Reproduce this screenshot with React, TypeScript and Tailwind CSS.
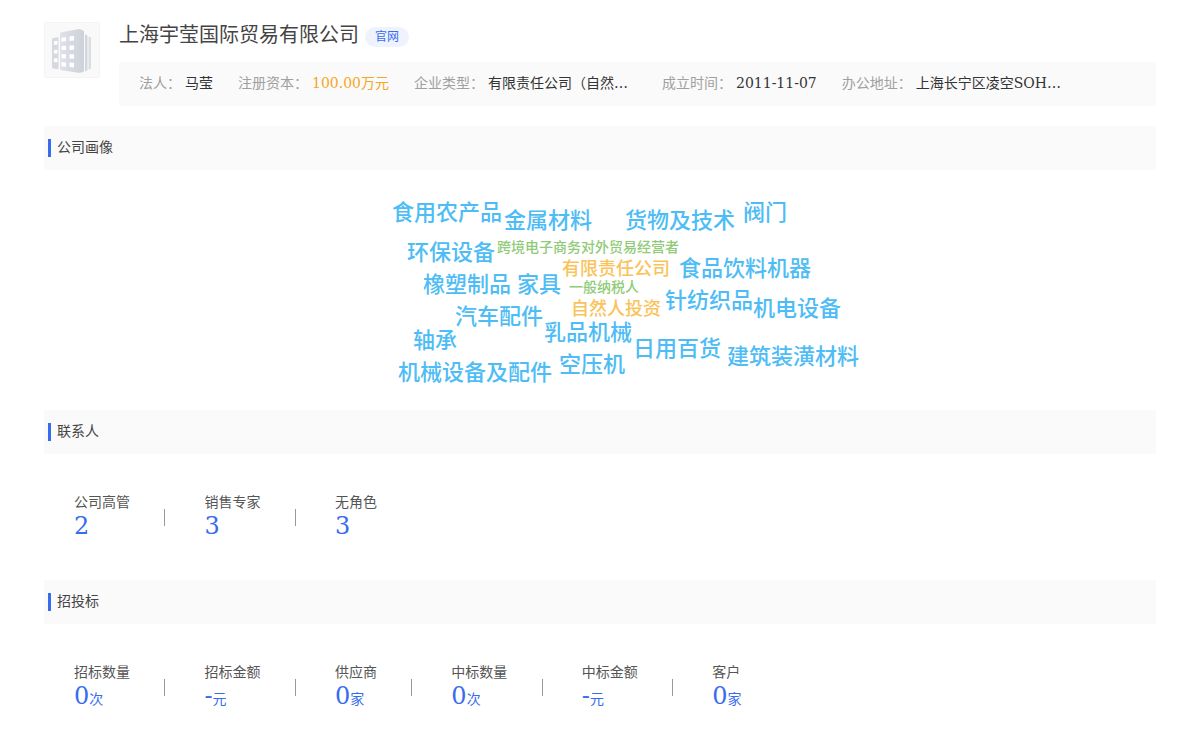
import React from 'react';

interface InfoItem {
    label: string;
    value: string;
    className?: string;
}

interface Stat {
    label: string;
    value: string;
    unit?: string;
}

interface CloudWord {
    text: string;
    className: string;
}

const companyInfo: InfoItem[] = [
    { label: '法人', value: '马莹' },
    { label: '注册资本', value: '100.00万元', className: 'text-[#f5a623]' },
    { label: '企业类型', value: '有限责任公司（自然…', className: 'w-[149px]' },
    { label: '成立时间', value: '2011-11-07' },
    { label: '办公地址', value: '上海长宁区凌空SOH…', className: 'w-[149px]' },
];

const contactStats: Stat[] = [
    { label: '公司高管', value: '2' },
    { label: '销售专家', value: '3' },
    { label: '无角色', value: '3' },
];

const bidStats: Stat[] = [
    { label: '招标数量', value: '0', unit: '次' },
    { label: '招标金额', value: '-', unit: '元' },
    { label: '供应商', value: '0', unit: '家' },
    { label: '中标数量', value: '0', unit: '次' },
    { label: '中标金额', value: '-', unit: '元' },
    { label: '客户', value: '0', unit: '家' },
];

// Positions are relative to the 480x240 cloud canvas
const cloudWords: CloudWord[] = [
    { text: '食用农产品', className: 'left-[32px] top-[31px] text-[22px] text-[#4ebcf5]' },
    { text: '金属材料', className: 'left-[144px] top-[39px] text-[22px] text-[#4ebcf5]' },
    { text: '货物及技术', className: 'left-[265px] top-[39px] text-[22px] text-[#4ebcf5]' },
    { text: '阀门', className: 'left-[383px] top-[31px] text-[22px] text-[#4ebcf5]' },
    { text: '环保设备', className: 'left-[47px] top-[71px] text-[22px] text-[#4ebcf5]' },
    { text: '跨境电子商务对外贸易经营者', className: 'left-[137px] top-[65px] text-[14px] text-[#8fcb78]' },
    { text: '有限责任公司', className: 'left-[202px] top-[87px] text-[18px] text-[#fac35a]' },
    { text: '食品饮料机器', className: 'left-[319px] top-[87px] text-[22px] text-[#4ebcf5]' },
    { text: '橡塑制品', className: 'left-[63px] top-[103px] text-[22px] text-[#4ebcf5]' },
    { text: '家具', className: 'left-[157px] top-[103px] text-[22px] text-[#4ebcf5]' },
    { text: '一般纳税人', className: 'left-[209px] top-[105px] text-[14px] text-[#8fcb78]' },
    { text: '针纺织品', className: 'left-[305px] top-[119px] text-[22px] text-[#4ebcf5]' },
    { text: '机电设备', className: 'left-[393px] top-[127px] text-[22px] text-[#4ebcf5]' },
    { text: '自然人投资', className: 'left-[211px] top-[127px] text-[18px] text-[#fac35a]' },
    { text: '汽车配件', className: 'left-[95px] top-[135px] text-[22px] text-[#4ebcf5]' },
    { text: '乳品机械', className: 'left-[184px] top-[151px] text-[22px] text-[#4ebcf5]' },
    { text: '轴承', className: 'left-[53px] top-[159px] text-[22px] text-[#4ebcf5]' },
    { text: '日用百货', className: 'left-[273px] top-[167px] text-[22px] text-[#4ebcf5]' },
    { text: '建筑装潢材料', className: 'left-[367px] top-[175px] text-[22px] text-[#4ebcf5]' },
    { text: '空压机', className: 'left-[199px] top-[183px] text-[22px] text-[#4ebcf5]' },
    { text: '机械设备及配件', className: 'left-[38px] top-[191px] text-[22px] text-[#4ebcf5]' },
];

const CompanyLogo: React.FC = () => (
    <svg viewBox="0 0 56 56" className="h-14 w-14 shrink-0" aria-hidden="true">
        <defs>
            <linearGradient id="tower" x1="0" y1="0" x2="1" y2="0">
                <stop offset="0" stopColor="#dfe2e7" />
                <stop offset="1" stopColor="#cdd1d9" />
            </linearGradient>
        </defs>
        <rect x="0.5" y="0.5" width="55" height="55" rx="1" fill="#f9f9f9" stroke="#f4f4f4" />
        <path d="M8 17.500Q8 16.200 9.300 16L14.500 15.200V47.300L9.300 46.600Q8 46.400 8 45.200Z" fill="#d6d9df" />
        <path d="M16 12Q16 10.600 17.400 10.200L34 7.200Q35 7 36 7.300L38.800 8.300Q40 8.800 40 10V48.500Q40 49.700 38.800 50L36 50.700Q35 50.900 34 50.700L17.400 48.200Q16 48 16 46.700Z" fill="url(#tower)" />
        <path d="M41 12.200L43.500 13.500V48.200L41 49.300Z" fill="#d3d7dd" />
        <path d="M44.500 14.200L47 15.500V46.800L44.500 47.800Z" fill="#dadde2" />
        <g fill="#fff">
            <path d="M10 19.200L13.500 18.700V22.500L10 22.800ZM10 28L13.500 27.800V31.600L10 31.500ZM10 36.300L13.500 36.500V40.200L10 39.900Z" />
            <path d="M17.500 15.700L22 15V19.300L17.500 19.700ZM17.500 24.100L22 23.800V28L17.500 28.100ZM17.500 32.200H22V36.500L17.500 36.300ZM17.500 40.200L22 40.500V44.700L17.500 44.200Z" />
            <path d="M25.500 14.500L30 13.700V18.500L25.500 19ZM25.500 23.500L30 23.200V27.800L25.500 28ZM25.500 32.200H30V36.800L25.500 36.600ZM25.500 40.500L30 40.900V45.600L25.500 45Z" />
        </g>
    </svg>
);

const SectionTitle: React.FC<{ title: string }> = ({ title }) => (
    <div className="flex h-11 items-center bg-[#fafafa] pl-1">
        <span className="h-[18px] w-[3px] bg-[#386cee]" />
        <h2 className="ml-1.5 pb-0.5 text-sm text-[#444]">{title}</h2>
    </div>
);

const StatList: React.FC<{ stats: Stat[] }> = ({ stats }) => (
    <div className="h-[126px] pl-[30px] pt-[38px] text-sm">
        {stats.map((stat, index) => (
            <React.Fragment key={stat.label}>
                {index > 0 && (
                    <>
                        {' '}
                        <span className="ml-[30px] mr-[39px] mt-0.5 inline-block h-[17px] w-px bg-[#999] align-middle" />
                    </>
                )}
                <div className="inline-block align-middle">
                    <p className="leading-5 text-[#555]">{stat.label}</p>
                    <p className="text-2xl leading-7 text-[#386cee]">
                        {stat.value}
                        {stat.unit && <span className="text-sm leading-none">{stat.unit}</span>}
                    </p>
                </div>
            </React.Fragment>
        ))}
    </div>
);

const App: React.FC = () => {
    return (
        <div className="bg-white px-11 pt-[22px] font-['DejaVu_Serif','Noto_Sans_CJK_SC',serif] text-[#333]">
            <header className="flex">
                <CompanyLogo />
                <div className="ml-[19px] min-w-0 flex-1">
                    <div className="flex h-10 items-start">
                        <h1 className="text-xl leading-[26px] text-[#444]">上海宇莹国际贸易有限公司</h1>
                        <a href="#" className="ml-1.5 mt-[5px] rounded-full bg-[#eff3fe] px-2.5 text-xs leading-5 text-[#386cee]">
                            官网
                        </a>
                    </div>
                    <dl className="flex h-11 items-center gap-[25px] bg-[#fafafa] pb-0.5 pl-5 text-sm">
                        {companyInfo.map(item => (
                            <div key={item.label} className="flex gap-1 whitespace-nowrap">
                                <dt className="text-[#a0a0a0]">{item.label}：</dt>
                                <dd className={item.className}>{item.value}</dd>
                            </div>
                        ))}
                    </dl>
                </div>
            </header>

            <section className="mt-5">
                <SectionTitle title="公司画像" />
                <div className="relative mx-auto h-60 w-[480px] font-medium">
                    {cloudWords.map(word => (
                        <span key={word.text} className={`absolute whitespace-nowrap leading-6 ${word.className}`}>
                            {word.text}
                        </span>
                    ))}
                </div>
            </section>

            <section>
                <SectionTitle title="联系人" />
                <StatList stats={contactStats} />
            </section>

            <section>
                <SectionTitle title="招投标" />
                <StatList stats={bidStats} />
            </section>
        </div>
    );
};

export default App;
